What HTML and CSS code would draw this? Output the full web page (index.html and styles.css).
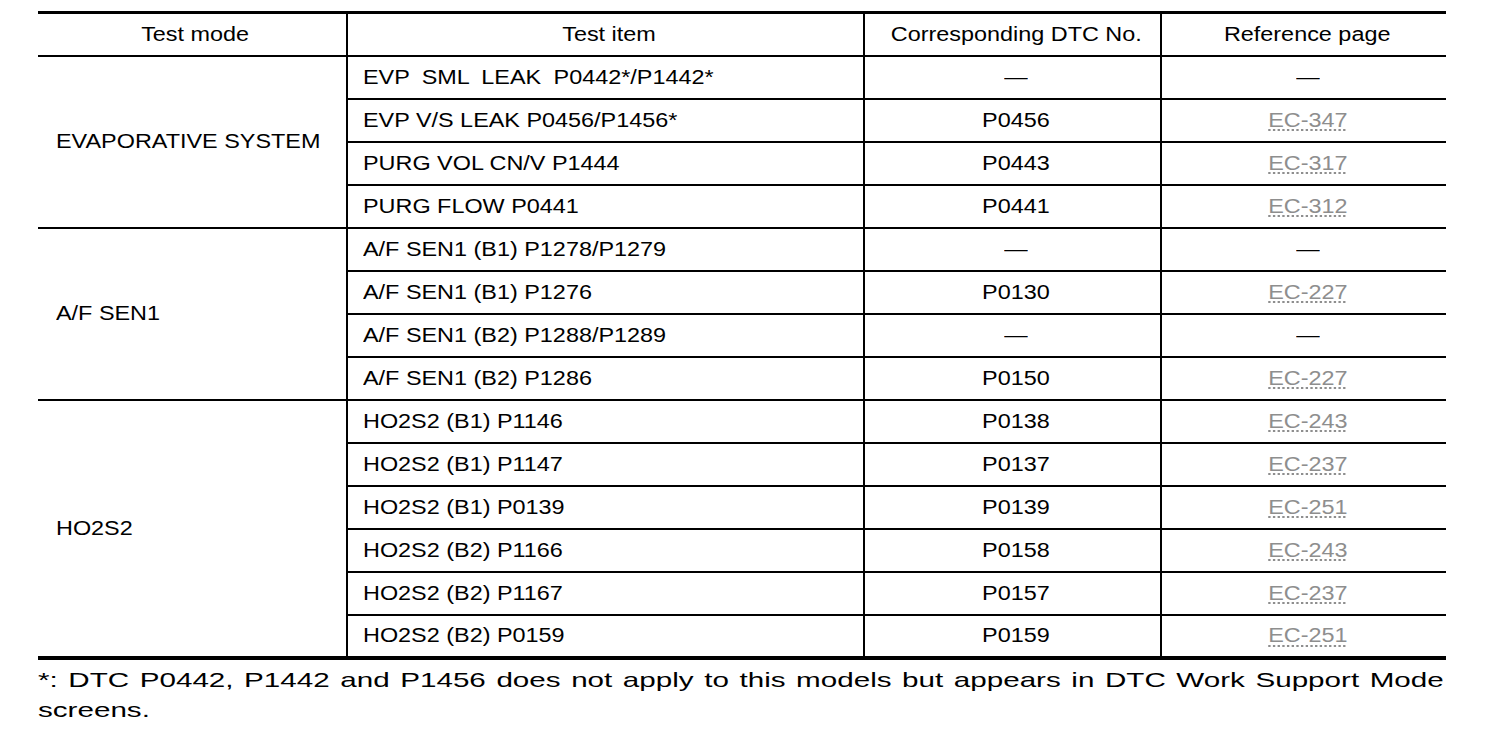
FILE: index.html
```html
<!DOCTYPE html>
<html>
<head>
<meta charset="utf-8">
<link rel="stylesheet" href="styles.css">
</head>
<body>
<div class="page">
<table class="dtc">
  <thead>
    <tr>
      <th class="c-mode"><span class="t">Test mode</span></th>
      <th class="c-item"><span class="t">Test item</span></th>
      <th class="c-dtc"><span class="t">Corresponding DTC No.</span></th>
      <th class="c-ref"><span class="t">Reference page</span></th>
    </tr>
  </thead>
  <tbody>
    <tr>
      <td class="mode" rowspan="4"><span class="t">EVAPORATIVE SYSTEM</span></td>
      <td class="item"><span class="t wide">EVP SML LEAK P0442*/P1442*</span></td>
      <td class="ctr"><span class="t">—</span></td>
      <td class="ctr"><span class="t">—</span></td>
    </tr>
    <tr>
      <td class="item"><span class="t">EVP V/S LEAK P0456/P1456*</span></td>
      <td class="ctr"><span class="t">P0456</span></td>
      <td class="ctr"><a class="t ref">EC-347</a></td>
    </tr>
    <tr>
      <td class="item"><span class="t">PURG VOL CN/V P1444</span></td>
      <td class="ctr"><span class="t">P0443</span></td>
      <td class="ctr"><a class="t ref">EC-317</a></td>
    </tr>
    <tr>
      <td class="item"><span class="t">PURG FLOW P0441</span></td>
      <td class="ctr"><span class="t">P0441</span></td>
      <td class="ctr"><a class="t ref">EC-312</a></td>
    </tr>
    <tr>
      <td class="mode" rowspan="4"><span class="t">A/F SEN1</span></td>
      <td class="item"><span class="t">A/F SEN1 (B1) P1278/P1279</span></td>
      <td class="ctr"><span class="t">—</span></td>
      <td class="ctr"><span class="t">—</span></td>
    </tr>
    <tr>
      <td class="item"><span class="t">A/F SEN1 (B1) P1276</span></td>
      <td class="ctr"><span class="t">P0130</span></td>
      <td class="ctr"><a class="t ref">EC-227</a></td>
    </tr>
    <tr>
      <td class="item"><span class="t">A/F SEN1 (B2) P1288/P1289</span></td>
      <td class="ctr"><span class="t">—</span></td>
      <td class="ctr"><span class="t">—</span></td>
    </tr>
    <tr>
      <td class="item"><span class="t">A/F SEN1 (B2) P1286</span></td>
      <td class="ctr"><span class="t">P0150</span></td>
      <td class="ctr"><a class="t ref">EC-227</a></td>
    </tr>
    <tr>
      <td class="mode" rowspan="6"><span class="t">HO2S2</span></td>
      <td class="item"><span class="t">HO2S2 (B1) P1146</span></td>
      <td class="ctr"><span class="t">P0138</span></td>
      <td class="ctr"><a class="t ref">EC-243</a></td>
    </tr>
    <tr>
      <td class="item"><span class="t">HO2S2 (B1) P1147</span></td>
      <td class="ctr"><span class="t">P0137</span></td>
      <td class="ctr"><a class="t ref">EC-237</a></td>
    </tr>
    <tr>
      <td class="item"><span class="t">HO2S2 (B1) P0139</span></td>
      <td class="ctr"><span class="t">P0139</span></td>
      <td class="ctr"><a class="t ref">EC-251</a></td>
    </tr>
    <tr>
      <td class="item"><span class="t">HO2S2 (B2) P1166</span></td>
      <td class="ctr"><span class="t">P0158</span></td>
      <td class="ctr"><a class="t ref">EC-243</a></td>
    </tr>
    <tr>
      <td class="item"><span class="t">HO2S2 (B2) P1167</span></td>
      <td class="ctr"><span class="t">P0157</span></td>
      <td class="ctr"><a class="t ref">EC-237</a></td>
    </tr>
    <tr>
      <td class="item"><span class="t">HO2S2 (B2) P0159</span></td>
      <td class="ctr"><span class="t">P0159</span></td>
      <td class="ctr"><a class="t ref">EC-251</a></td>
    </tr>
  </tbody>
</table>
<p class="note">*: DTC P0442, P1442 and P1456 does not apply to this models but appears in DTC Work Support Mode screens.</p>
</div>
</body>
</html>
```

FILE: styles.css
```css
html, body {
  margin: 0;
  padding: 0;
  background: #ffffff;
}

body {
  font-family: "Liberation Sans", Arial, sans-serif;
  color: #000000;
}

.page {
  padding: 11px 58px 0 38px;
  width: 1408px;
}

.dtc {
  width: 1408px;
  border-collapse: collapse;
  table-layout: fixed;
  font-size: 20px;
  border-top: 3px solid #000;
  border-bottom: 4px solid #000;
}

.dtc th,
.dtc td {
  height: 43px;
  padding: 0;
  box-sizing: border-box;
  border-bottom: 2px solid #000;
  vertical-align: middle;
  font-weight: normal;
  white-space: nowrap;
}

.dtc th,
.dtc .ctr {
  text-align: center;
  padding-left: 7px;
}

.dtc th + th,
.dtc td + td {
  border-left: 2px solid #000;
}

.dtc .mode {
  border-right: 2px solid #000;
  text-align: left;
  padding-left: 18px;
}

.dtc .item {
  border-left: 2px solid #000;
  text-align: left;
  padding-left: 15px;
}

.c-mode { width: 309px; }
.c-item { width: 517px; }
.c-dtc  { width: 297px; }
.c-ref  { width: 285px; }

/* the source document is rendered horizontally stretched */
.t {
  display: inline-block;
  transform: scaleX(1.17);
  transform-origin: center center;
}

.mode .t,
.item .t {
  transform-origin: left center;
}

.wide {
  word-spacing: 5px;
}

.ref {
  color: #8e8e8e;
  text-decoration: underline dotted #8e8e8e;
  text-underline-offset: 3px;
}

.note {
  margin: 5px 0 0 0;
  width: 997px;
  font-size: 21px;
  line-height: 30px;
  text-align: justify;
  transform: scaleX(1.41);
  transform-origin: left top;
}
```
